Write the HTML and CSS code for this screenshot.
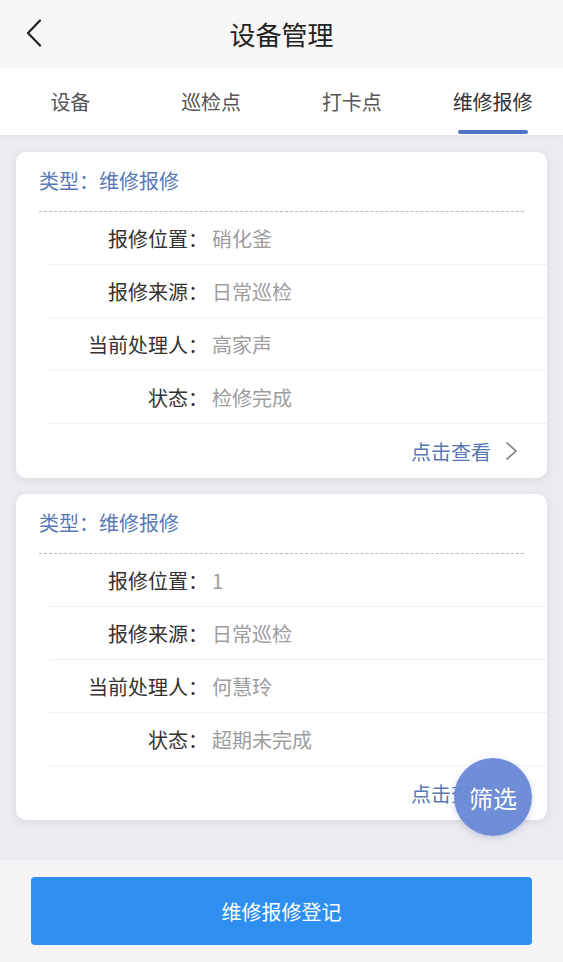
FILE: index.html
```html
<!DOCTYPE html>
<html lang="zh">
<head>
<meta charset="utf-8">
<title>设备管理</title>
<link rel="stylesheet" href="styles.css">
</head>
<body>
<div class="app">
  <header class="topbar">
    <span class="back">
      <svg width="18" height="28" viewBox="0 0 18 28"><path d="M15 1.5 L3 14 L15 26.5" fill="none" stroke="#222" stroke-width="2.2" stroke-linecap="round" stroke-linejoin="round"/></svg>
    </span>
    <h1 class="title">设备管理</h1>
  </header>
  <nav class="tabs">
    <div class="tab">设备</div>
    <div class="tab">巡检点</div>
    <div class="tab">打卡点</div>
    <div class="tab active">维修报修</div>
  </nav>
  <main class="content">
    <section class="card">
      <div class="card-head">类型：维修报修</div>
      <div class="row"><span class="label">报修位置：</span><span class="value">硝化釜</span></div>
      <div class="row"><span class="label">报修来源：</span><span class="value">日常巡检</span></div>
      <div class="row"><span class="label">当前处理人：</span><span class="value">高家声</span></div>
      <div class="row"><span class="label">状态：</span><span class="value">检修完成</span></div>
      <div class="card-foot"><span>点击查看</span>
        <svg width="13" height="20" viewBox="0 0 13 20"><path d="M2 2 L11 10 L2 18" fill="none" stroke="#8a8a8a" stroke-width="1.8" stroke-linecap="round" stroke-linejoin="round"/></svg>
      </div>
    </section>
    <section class="card">
      <div class="card-head">类型：维修报修</div>
      <div class="row"><span class="label">报修位置：</span><span class="value">1</span></div>
      <div class="row"><span class="label">报修来源：</span><span class="value">日常巡检</span></div>
      <div class="row"><span class="label">当前处理人：</span><span class="value">何慧玲</span></div>
      <div class="row"><span class="label">状态：</span><span class="value">超期未完成</span></div>
      <div class="card-foot"><span>点击查看</span>
        <svg width="13" height="20" viewBox="0 0 13 20"><path d="M2 2 L11 10 L2 18" fill="none" stroke="#8a8a8a" stroke-width="1.8" stroke-linecap="round" stroke-linejoin="round"/></svg>
      </div>
    </section>
    <div class="fab">筛选</div>
  </main>
  <footer class="bottom">
    <button class="primary">维修报修登记</button>
  </footer>
</div>
</body>
</html>
```
FILE: styles.css
```css
* { box-sizing: border-box; }
html, body { margin: 0; padding: 0; }
body {
  font-family: "Noto Sans CJK SC", "Noto Sans", sans-serif;
  background: #ebebf0;
  color: #333;
}
.app {
  height: 962px;
  display: flex;
  flex-direction: column;
  overflow: hidden;
}
.topbar {
  height: 68px;
  flex: none;
  background: #f7f7f7;
  display: flex;
  align-items: center;
  justify-content: center;
  position: relative;
}
.back {
  position: absolute;
  left: 25px;
  top: 19px;
  display: flex;
}
.title {
  margin: 0;
  font-size: 26px;
  font-weight: 400;
  color: #222;
  line-height: 1;
}
.tabs {
  height: 67px;
  flex: none;
  background: #fff;
  display: grid;
  grid-template-columns: repeat(4, 1fr);
  box-shadow: 0 2px 4px rgba(0,0,0,0.03);
}
.tab {
  position: relative;
  display: flex;
  align-items: center;
  justify-content: center;
  font-size: 20px;
  color: #555;
  padding-bottom: 1px;
}
.tab.active { color: #333; }
.tab.active::after {
  content: "";
  position: absolute;
  left: 50%;
  margin-left: -35px;
  width: 70px;
  height: 4px;
  bottom: 1px;
  background: #4f74c4;
  border-radius: 2px;
}
.content {
  flex: 1;
  position: relative;
  padding: 17px 16px 0;
  display: flex;
  flex-direction: column;
  gap: 16px;
}
.card {
  background: #fff;
  border-radius: 10px;
  box-shadow: 0 2px 8px rgba(60,60,90,0.10);
}
.card-head {
  height: 60px;
  margin: 0 23px;
  padding-bottom: 2px;
  display: flex;
  align-items: center;
  font-size: 20px;
  color: #5a78b6;
  border-bottom: 1px dashed #b8b8b8;
}
.row {
  height: 53px;
  margin-left: 34px;
  display: flex;
  align-items: center;
  font-size: 20px;
  border-bottom: 1px solid #f1f1f1;
}
.label {
  width: 158px;
  text-align: right;
  color: #333;
}
.value {
  margin-left: 4px;
  color: #9d9d9d;
}
.card-foot {
  height: 54px;
  display: flex;
  align-items: center;
  justify-content: flex-end;
  gap: 14px;
  padding-right: 29px;
  font-size: 20px;
  color: #5a78b6;
}
.fab {
  position: absolute;
  left: 454px;
  top: 623px;
  width: 78px;
  height: 78px;
  border-radius: 50%;
  background: rgba(106, 137, 214, 0.96);
  color: #fff;
  font-size: 24px;
  display: flex;
  align-items: center;
  justify-content: center;
  box-shadow: 0 2px 6px rgba(80,100,170,0.25);
}
.bottom {
  height: 102px;
  flex: none;
  background: #f5f5f8;
  padding: 17px 31px 17px 31px;
}
.primary {
  width: 100%;
  height: 68px;
  border: none;
  border-radius: 4px;
  background: #2f8ff0;
  color: #fff;
  font-family: inherit;
  font-size: 20px;
}
```
